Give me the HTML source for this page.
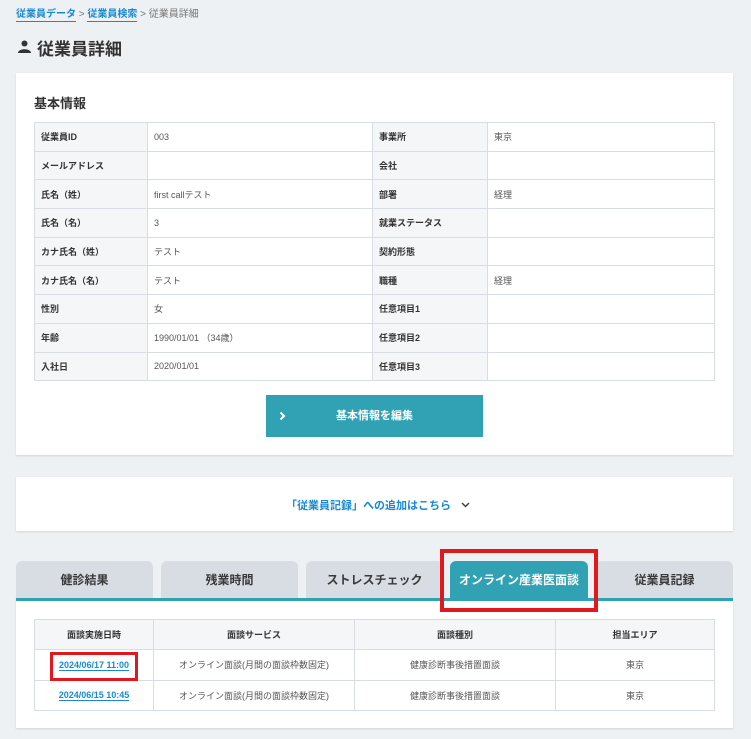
<!DOCTYPE html>
<html><head><meta charset="utf-8"><style>
*{box-sizing:border-box;margin:0;padding:0}
body{width:751px;height:739px;background:#eef1f4;font-family:"Liberation Sans","Noto Sans CJK JP",sans-serif;color:#333;position:relative;overflow:hidden}
.abs{position:absolute}
.bc{left:16px;top:5px;font-size:10px;color:#777}
.bc a{color:#1a8ad0;font-weight:bold;text-decoration:none;border-bottom:1.5px solid #1a8ad0;padding-bottom:1px}
h1{position:absolute;left:18px;top:35px;font-size:17px;font-weight:bold;color:#333}
.card{background:#fff;box-shadow:0 1px 2px rgba(0,0,0,.12)}
table{border-collapse:collapse;font-size:9px}
td,th{border:1px solid #d8dde3}
.info td{height:28.7px;padding:0 6px}
.info td.l{background:#f4f6f8;font-weight:bold;color:#333}
.info td.v{color:#555}
.tab{position:absolute;top:561px;height:38px;width:137px;background:#d8dde3;border-radius:6px 6px 0 0;text-align:center;line-height:38px;font-size:12px;font-weight:bold;color:#3a3a3a}
.tab.on{background:#31a2b3;color:#fff}
.rec th{background:#f4f6f8;font-weight:bold;height:30px;color:#333}
.rec td{height:30.5px;text-align:center;color:#555}
.rec a{color:#1a8ad0;font-weight:bold;text-decoration:none;border-bottom:1.5px solid #1a8ad0}
</style></head><body>
<div class="abs bc"><a>従業員データ</a> &gt; <a>従業員検索</a> &gt; 従業員詳細</div>
<svg class="abs" style="left:18px;top:40px" width="13" height="13" viewBox="0 0 13 13"><circle cx="6.5" cy="3.5" r="3" fill="#333"/><path d="M0 13 C0 8 13 8 13 13Z" fill="#333"/></svg>
<h1 style="left:37px">従業員詳細</h1>

<div class="abs card" style="left:16px;top:73px;width:717px;height:382px"></div>
<div class="abs" style="left:34px;top:93px;font-size:13px;font-weight:bold">基本情報</div>
<table class="abs info" style="left:34px;top:122px;width:681px">
<colgroup><col style="width:113px"><col style="width:225px"><col style="width:115px"><col></colgroup>
<tr><td class="l">従業員ID</td><td class="v">003</td><td class="l">事業所</td><td class="v">東京</td></tr>
<tr><td class="l">メールアドレス</td><td class="v"></td><td class="l">会社</td><td class="v"></td></tr>
<tr><td class="l">氏名（姓）</td><td class="v">first callテスト</td><td class="l">部署</td><td class="v">経理</td></tr>
<tr><td class="l">氏名（名）</td><td class="v">3</td><td class="l">就業ステータス</td><td class="v"></td></tr>
<tr><td class="l">カナ氏名（姓）</td><td class="v">テスト</td><td class="l">契約形態</td><td class="v"></td></tr>
<tr><td class="l">カナ氏名（名）</td><td class="v">テスト</td><td class="l">職種</td><td class="v">経理</td></tr>
<tr><td class="l">性別</td><td class="v">女</td><td class="l">任意項目1</td><td class="v"></td></tr>
<tr><td class="l">年齢</td><td class="v">1990/01/01 （34歳）</td><td class="l">任意項目2</td><td class="v"></td></tr>
<tr><td class="l">入社日</td><td class="v">2020/01/01</td><td class="l">任意項目3</td><td class="v"></td></tr>
</table>
<div class="abs" style="left:266px;top:395px;width:217px;height:42px;background:#31a2b3;color:#fff;font-size:11px;font-weight:bold;line-height:42px;text-align:center">基本情報を編集</div>
<svg class="abs" style="left:279px;top:411px" width="7" height="10" viewBox="0 0 7 10"><path d="M1.5 1.5L5 5L1.5 8.5" stroke="#fff" stroke-width="2" fill="none"/></svg>

<div class="abs card" style="left:16px;top:477px;width:717px;height:54px"></div>
<div class="abs" style="left:286px;top:497px;font-size:11px;font-weight:bold;color:#1a8ad0;white-space:nowrap">「従業員記録」への追加はこちら</div>
<svg class="abs" style="left:461px;top:502px" width="9" height="6" viewBox="0 0 9 6"><path d="M1 1L4.5 4.5L8 1" stroke="#444" stroke-width="1.5" fill="none"/></svg>

<div class="abs card" style="left:16px;top:598px;width:717px;height:130px"></div>
<div class="tab" style="left:16px">健診結果</div>
<div class="tab" style="left:161px">残業時間</div>
<div class="tab" style="left:306px">ストレスチェック</div>
<div class="tab on" style="left:450px;width:138px">オンライン産業医面談</div>
<div class="tab" style="left:596px">従業員記録</div>
<div class="abs" style="left:16px;top:598px;width:717px;height:3px;background:#31a2b3"></div>
<div class="abs" style="left:440px;top:549px;width:158px;height:63px;border:4px solid #e0191e"></div>

<table class="abs rec" style="left:34px;top:619px;width:681px;font-size:9px">
<colgroup><col style="width:119px"><col style="width:201px"><col style="width:201px"><col></colgroup>
<tr><th>面談実施日時</th><th>面談サービス</th><th>面談種別</th><th>担当エリア</th></tr>
<tr><td><a>2024/06/17 11:00</a></td><td>オンライン面談(月間の面談枠数固定)</td><td>健康診断事後措置面談</td><td>東京</td></tr>
<tr><td><a>2024/06/15 10:45</a></td><td>オンライン面談(月間の面談枠数固定)</td><td>健康診断事後措置面談</td><td>東京</td></tr>
</table>
<div class="abs" style="left:50px;top:652px;width:88px;height:29px;border:3px solid #e0191e"></div>
</body></html>
